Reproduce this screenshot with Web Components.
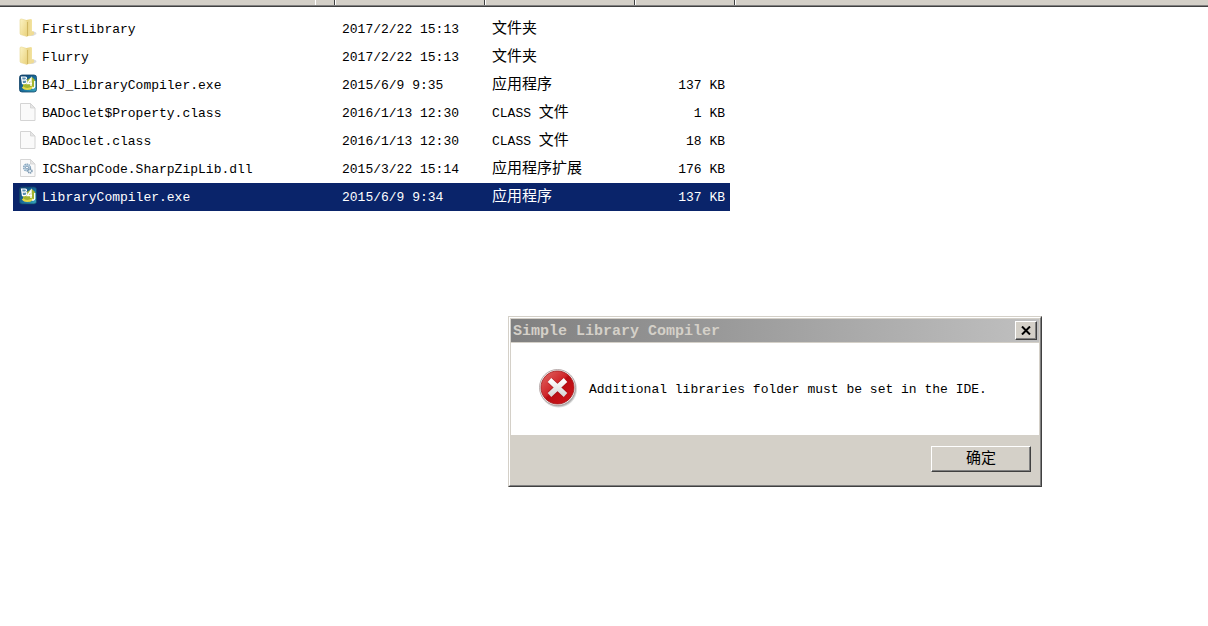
<!DOCTYPE html>
<html lang="zh-CN">
<head>
<meta charset="utf-8">
<meta name="viewport" content="width=device-width, initial-scale=1">
<title>Simple Library Compiler</title>
<style>
  :root {
    --face: #d4d0c8;
    --highlight: #fff;
    --shadow: #808080;
    --dark: #404040;
    --select: #0a246a;
  }
  html, body { height: 100%; }
  body {
    margin: 0;
    background: #fff;
    color: #000;
    font: 13px/26px "Liberation Mono", "Noto Sans CJK SC", monospace;
  }
</style>
</head>
<body>
<explorer-view></explorer-view>

<script>
const define = (name, html, setup) => {
  const template = document.createElement('template');
  template.innerHTML = html;
  customElements.define(name, class extends HTMLElement {
    constructor() {
      super();
      this.attachShadow({ mode: 'open' }).append(template.content.cloneNode(true));
    }
    connectedCallback() {
      if (setup && !this.ready) { this.ready = true; setup(this, this.shadowRoot); }
    }
  });
};

const icons = {
  folder: `<svg viewBox="0 0 18 20">
    <defs><linearGradient id="a" x2="1" y2="1"><stop stop-color="#fbf3c4"/><stop offset="1" stop-color="#ead27c"/></linearGradient>
    <linearGradient id="b" x2="1"><stop stop-color="#e2c870"/><stop offset="1" stop-color="#f3e3a0"/></linearGradient></defs>
    <path d="M11 18l3-5 3 1.500.5 1.500-3.500 2z" fill="#c4c4c0" opacity=".6"/>
    <path d="M5 2.500l7-1.500 1 .8V17l-5 1.500z" fill="url(#b)"/>
    <path d="M13 13l2 1v2.500l-5 1.700z" fill="#f0dc94"/>
    <path d="M1 2Q1 .8 2.500 1L7 2.200Q8 2.600 8 4v14.500l-6.500-2Q1 16 1 15z" fill="url(#a)" stroke="#e8d792" stroke-width=".6"/>
    <path d="M8.500 4v14" stroke="#c9ad55" stroke-width=".8"/></svg>`,
  page: `<svg viewBox="0 0 18 20">
    <path d="M1.500 1.500h10l4.500 4.500v12.500H1.500z" fill="#fafafa" stroke="#d4d4d4"/>
    <path d="M11.500 1.500V6H16z" fill="#e6e6e6" stroke="#d2d2d2" stroke-width=".8"/></svg>`,
  dll: `<svg viewBox="0 0 18 20">
    <path d="M1.500 1.500h10l4.500 4.500v12.500H1.500z" fill="#fafafa" stroke="#d6d6d6"/>
    <path d="M11.500 1.500V6H16z" fill="#e6e6e6" stroke="#d2d2d2" stroke-width=".8"/>
    <circle cx="8" cy="9.500" r="3.300" fill="#cfe2ef" stroke="#8ba9c0" stroke-width="1.600" stroke-dasharray="1.500 .6"/>
    <circle cx="8" cy="9.500" r="1.500" fill="#f4f8fb" stroke="#6d8ca8" stroke-width=".9"/>
    <circle cx="11" cy="13" r="2" fill="#dce8f0" stroke="#7592ab" stroke-width="1.300" stroke-dasharray="1.200 .5"/></svg>`,
  app: `<svg viewBox="0 0 18 20">
    <defs><linearGradient id="c" x2="1" y2="1"><stop stop-color="#123e68"/><stop offset=".5" stop-color="#17699a"/><stop offset="1" stop-color="#38a8bd"/></linearGradient></defs>
    <rect x=".5" y="1" width="17" height="17" rx="2.500" fill="url(#c)" stroke="#124468" stroke-width=".8"/>
    <path d="M4 8l9-5 3 3v6l-5 4-7-1z" fill="#a3b52f"/>
    <path d="M3.500 13q4 4 10.500 0" fill="none" stroke="#e2d84a" stroke-width="2"/>
    <path d="M2.500 3h3.700q1.600.2 1.200 1.800L6.500 6q1.700.5 1.300 2-.4 1.700-2 1.700H3.500zM3 6.200h3" fill="#5a8fb0" stroke="#fff" stroke-width="1.200"/>
    <path d="M12 12V4.500L8.500 9.500H13" fill="none" stroke="#fff" stroke-width="1.400"/>
    <path d="M15.700 7v5.500q-.4 2-2.700 1.300" fill="none" stroke="#fff" stroke-width="1.300"/></svg>`
};

define('file-icon', `
  <style>:host { display: block; width: 18px; height: 20px; } svg { display: block; width: 100%; height: 100%; }</style>
`, (host, root) => root.append(
  document.createRange().createContextualFragment(icons[host.getAttribute('kind')])));

define('column-header', `
  <style>
    :host { display: flex; height: 5px; background: var(--face); border-bottom: 1px solid var(--dark); box-shadow: inset 0 -1px var(--shadow); padding-bottom: 1px; box-sizing: content-box; }
    i { box-sizing: border-box; height: 5px; border-right: 1px solid var(--dark); border-left: 1px solid var(--highlight); }
    .lead { width: 315px; border: 0; }
    .grip { width: 20px; }
    .mid { width: 150px; }
    .size { width: 100px; }
    .rest { flex: 1; border-right: 0; }
  </style>
  <i class="lead"></i><i class="grip"></i><i class="mid"></i><i class="mid"></i><i class="size"></i><i class="rest"></i>
`);

define('file-list', `
  <style>
    :host { display: block; padding: 8px 13px; }
    table { border-collapse: collapse; table-layout: fixed; width: 717px; }
    .name { width: 329px; } .date { width: 150px; } .type { width: 138px; } .size { width: 100px; }
    tr { height: 28px; }
    td { padding: 2px 0 0; white-space: nowrap; }
    td:last-child { text-align: right; padding-right: 5px; }
    td div { display: flex; align-items: flex-start; gap: 5px; padding-left: 6px; height: 26px; }
    file-icon { margin-top: 1px; }
    .cjk { font-size: 15px; }
    tr[aria-selected=true] { background: var(--select); color: #fff; }
  </style>
  <table><colgroup><col class="name"><col class="date"><col class="type"><col class="size"></colgroup><tbody></tbody></table>
`, (host, root) => {
  const files = [
    ['folder', 'FirstLibrary', '2017/2/22 15:13', '文件夹', ''],
    ['folder', 'Flurry', '2017/2/22 15:13', '文件夹', ''],
    ['app', 'B4J_LibraryCompiler.exe', '2015/6/9 9:35', '应用程序', '137 KB'],
    ['page', 'BADoclet$Property.class', '2016/1/13 12:30', 'CLASS 文件', '1 KB'],
    ['page', 'BADoclet.class', '2016/1/13 12:30', 'CLASS 文件', '18 KB'],
    ['dll', 'ICSharpCode.SharpZipLib.dll', '2015/3/22 15:14', '应用程序扩展', '176 KB'],
    ['app', 'LibraryCompiler.exe', '2015/6/9 9:34', '应用程序', '137 KB', true]
  ];
  root.querySelector('tbody').innerHTML = files.map(([kind, name, date, type, size, selected]) => `
    <tr aria-selected="${!!selected}"><td><div><file-icon kind="${kind}"></file-icon><span>${name}</span></div></td>
    <td>${date}</td><td>${type.replace(/[\u4e00-\u9fff]+/, '<span class="cjk">$&</span>')}</td><td>${size}</td></tr>`).join('');
});

define('push-button', `
  <style>
    :host { display: block; }
    button {
      display: flex; align-items: center; justify-content: center;
      box-sizing: border-box; width: 100%; height: 100%; margin: 0; padding: 0;
      background: var(--face); color: #000; font: inherit; line-height: 20px; border-radius: 0;
      border: 1px solid; border-color: var(--highlight) var(--dark) var(--dark) var(--highlight);
      box-shadow: inset -1px -1px var(--shadow);
    }
    :host(.text) button { padding-top: 2px; }
  </style>
  <button type="button"><slot></slot></button>
`, (host, root) => {
  const label = host.getAttribute('label');
  if (label) root.querySelector('button').setAttribute('aria-label', label);
});

define('error-icon', `
  <style>:host { display: block; width: 40px; height: 40px; } svg { display: block; }</style>
  <svg width="40" height="40" viewBox="0 0 40 40">
    <defs>
      <linearGradient id="r" x2="1" y2="1"><stop stop-color="#e26a66"/><stop offset=".45" stop-color="#cf2529"/><stop offset=".5" stop-color="#b80d13"/><stop offset="1" stop-color="#d3161b"/></linearGradient>
      <linearGradient id="x" x2="0" y2="1"><stop stop-color="#fff"/><stop offset="1" stop-color="#d8d8d8"/></linearGradient>
      <radialGradient id="s"><stop offset=".8" stop-color="#777"/><stop offset="1" stop-color="#777" stop-opacity="0"/></radialGradient>
    </defs>
    <circle cx="19.500" cy="20" r="19" fill="url(#s)"/>
    <circle cx="18.500" cy="18.500" r="18" fill="#eee" stroke="#a99" stroke-width=".8"/>
    <circle cx="18.500" cy="18.500" r="16.500" fill="url(#r)" stroke="#a51a1d" stroke-width=".8"/>
    <path d="M11 11.500l15 14m0-14l-15 14" stroke="#8f1013" stroke-width="6.500" opacity=".5"/>
    <path d="M10.500 11l16 15m0-15l-16 15" stroke="url(#x)" stroke-width="5.200"/>
  </svg>
`);

define('message-box', `
  <style>
    :host { display: block; box-sizing: border-box; background: var(--face); border: 1px solid; border-color: var(--face) var(--dark) var(--dark) var(--face); }
    .frame { border: 1px solid; border-color: var(--highlight) var(--shadow) var(--shadow) var(--highlight); padding: 1px 1px 0; }
    header { display: flex; align-items: center; justify-content: space-between; height: 23px; margin-bottom: 1px; padding: 0 2px; background: linear-gradient(90deg, #808080, #c0c0c0); }
    h1 { margin: 0; padding-top: 2px; font-size: 15px; line-height: 20px; font-weight: 700; color: var(--face); white-space: nowrap; }
    header push-button { width: 22px; height: 19px; }
    main { display: flex; align-items: center; gap: 10px; min-height: 92px; padding: 0 28px; box-sizing: border-box; background: #fff; line-height: 20px; }
    p { margin: 0; padding-top: 2px; }
    footer { display: flex; justify-content: flex-end; padding: 11px 8px 13px; }
    footer push-button { width: 100px; height: 26px; font-size: 15px; }
  </style>
  <div class="frame" role="dialog" aria-labelledby="title">
    <header><h1 id="title"><slot name="title"></slot></h1>
      <push-button label="Close"><svg width="10" height="9" viewBox="0 0 10 9"><path d="M1 .5l8 8M9 .5l-8 8" stroke="#000" stroke-width="2"/></svg></push-button>
    </header>
    <main><error-icon></error-icon><p><slot></slot></p></main>
    <footer><push-button class="text"><slot name="action"></slot></push-button></footer>
  </div>
`);

define('explorer-view', `
  <style>
    :host { display: block; position: relative; min-height: 100%; overflow: hidden; }
    message-box { position: absolute; left: 508px; top: 316px; width: 534px; }
  </style>
  <column-header></column-header>
  <file-list></file-list>
  <message-box><span slot="title">Simple Library Compiler</span>Additional libraries folder must be set in the IDE.<span slot="action">确定</span></message-box>
`);
</script>
</body>
</html>
